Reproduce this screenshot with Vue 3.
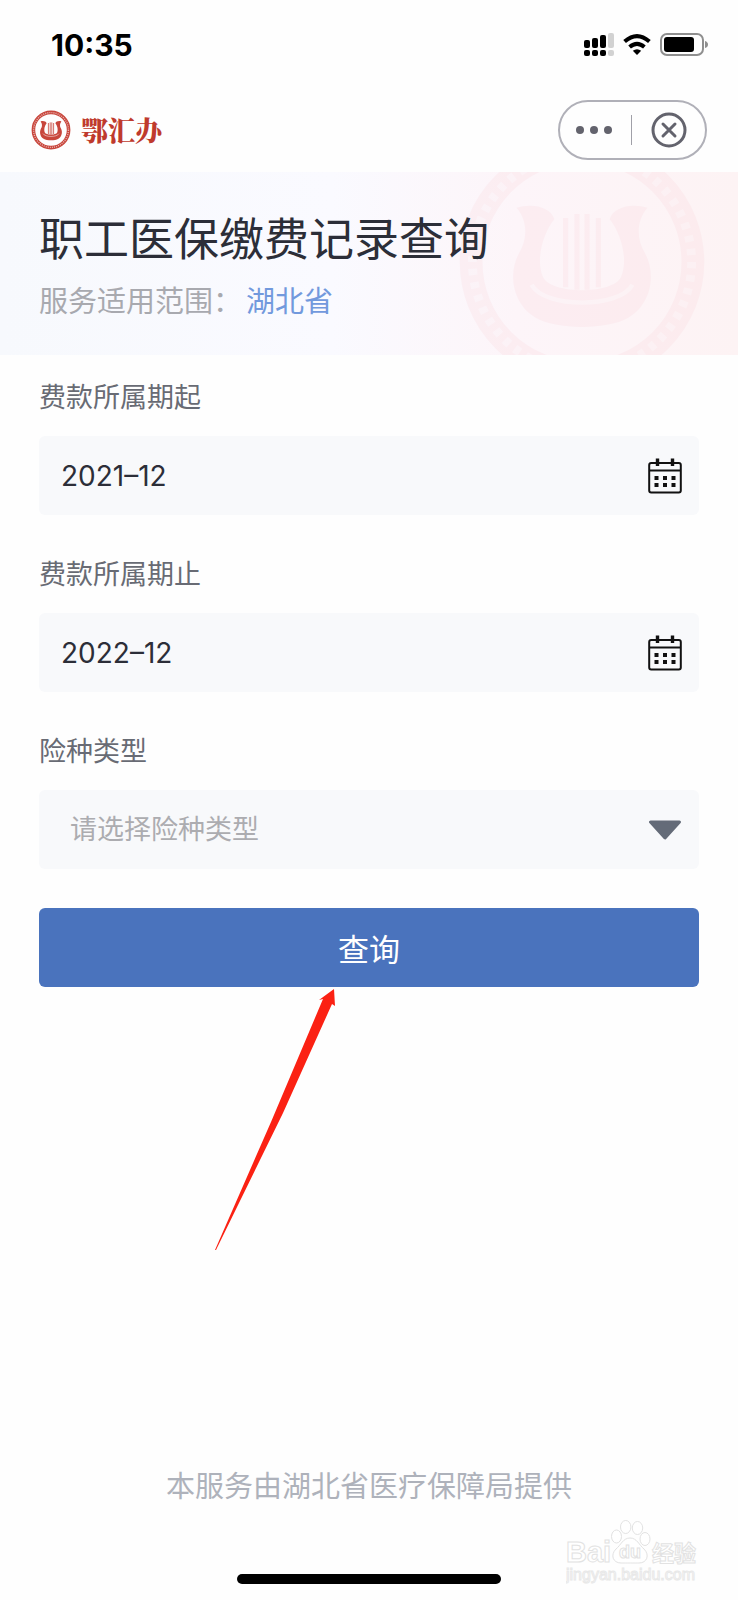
<template>
  <div class="pagina">
    <svg class="defs" aria-hidden="true">
      <symbol id="sello" viewBox="0 0 40 40">
        <circle cx="20" cy="20" r="17.6" fill="none" stroke="currentColor" stroke-width="3.6" />
        <circle cx="20" cy="20" r="17.4" fill="none" stroke="#fff" stroke-width="1.4" stroke-dasharray="1 1.1" opacity="0.6" />
        <path d="M9.6 11.4 C12 10.6 15 11.2 15.6 13.2 C13.8 15.4 12.6 19.6 13.8 22.4 C15 25.2 25 25.2 26.2 22.4 C27.4 19.6 26.2 15.4 24.4 13.2 C25 11.2 28 10.6 30.4 11.4 C28.6 13.4 28.6 16.4 30 18.6 C32 22.4 30.6 27 27.4 28.8 C24 30.8 16 30.8 12.6 28.8 C9.4 27 8 22.4 10 18.6 C11.4 16.4 11.4 13.4 9.6 11.4 Z" fill="currentColor" />
        <path d="M17.4 13 V24 M19.2 12.4 V24.4 M20.8 12.4 V24.4 M22.6 13 V24" fill="none" stroke="currentColor" stroke-width="0.8" />
        <path d="M12 23.6 C14 27.4 26 27.4 28 23.6" fill="none" stroke="#fff" stroke-width="0.7" opacity="0.7" />
      </symbol>
    </svg>

    <div class="barra-estado">
      <span class="hora">10:35</span>
      <div class="indicadores">
        <svg width="30" height="24" viewBox="0 0 30 24">
          <g fill="#000">
            <rect x="0" y="7" width="6" height="8" rx="2" />
            <rect x="8" y="5" width="6" height="10" rx="2" />
            <rect x="16" y="2" width="6" height="13" rx="2" />
            <rect x="0" y="17" width="6" height="6" rx="2" />
            <rect x="8" y="17" width="6" height="6" rx="2" />
            <rect x="16" y="17" width="6" height="6" rx="2" />
          </g>
          <g fill="#d2d2d2">
            <rect x="24" y="0" width="6" height="15" rx="2" />
            <rect x="24" y="17" width="6" height="6" rx="2" />
          </g>
        </svg>
        <svg width="28" height="22" viewBox="0 0 28 22">
          <path d="M1.6 7.6 Q14 -3.4 26.4 7.6" fill="none" stroke="#000" stroke-width="4" />
          <path d="M6.6 13 Q14 6.6 21.4 13" fill="none" stroke="#000" stroke-width="4" />
          <path d="M14 21 L9.8 16.8 Q14 13.6 18.2 16.8 Z" fill="#000" />
        </svg>
        <svg width="48" height="24" viewBox="0 0 48 24">
          <rect x="1" y="1" width="42" height="21" rx="6" fill="none" stroke="#8f8f8f" stroke-width="2" />
          <rect x="4" y="4" width="30" height="15" rx="3" fill="#000" />
          <path d="M45 8 Q48 9 48 11.5 Q48 14 45 15 Z" fill="#8f8f8f" />
        </svg>
      </div>
    </div>

    <header class="cabecera">
      <div class="marca">
        <svg class="logo" width="40" height="40"><use href="#sello" /></svg>
        <span class="nombre">鄂汇办</span>
      </div>
      <div class="capsula">
        <button type="button" aria-label="更多">
          <svg width="36" height="36" viewBox="0 0 36 36" fill="#63636d">
            <circle cx="4" cy="18" r="4" />
            <circle cx="18" cy="18" r="4" />
            <circle cx="32" cy="18" r="4" />
          </svg>
        </button>
        <span class="separador"></span>
        <button type="button" aria-label="关闭">
          <svg width="36" height="36" viewBox="0 0 36 36" fill="none" stroke="#63636d" stroke-width="3">
            <circle cx="18" cy="18" r="16" />
            <path d="M12 12 L24 24 M24 12 L12 24" stroke-linecap="round" />
          </svg>
        </button>
      </div>
    </header>

    <section class="banner">
      <svg class="banner-sello"><use href="#sello" /></svg>
      <h1>职工医保缴费记录查询</h1>
      <p>服务适用范围：<a href="#">湖北省</a></p>
    </section>

    <form class="formulario" @submit.prevent>
      <div v-for="fecha in fechas" :key="fecha.id" class="campo">
        <label :for="fecha.id">{{ fecha.etiqueta }}</label>
        <div class="caja">
          <input :id="fecha.id" v-model="fecha.valor" type="text" readonly />
          <svg width="34" height="36" viewBox="0 0 34 36">
            <rect x="1.2" y="5" width="31.6" height="29.6" rx="2" fill="none" stroke="#111" stroke-width="2" />
            <path d="M1 12.5 H33" stroke="#111" stroke-width="2" />
            <path d="M9.5 0.5 V8 M24.5 0.5 V8" stroke="#111" stroke-width="3.4" />
            <g fill="#111">
              <rect x="6.5" y="18" width="4" height="4" />
              <rect x="15" y="18" width="4" height="4" />
              <rect x="23.5" y="18" width="4" height="4" />
              <rect x="6.5" y="25" width="4" height="4" />
              <rect x="15" y="25" width="4" height="4" />
              <rect x="23.5" y="25" width="4" height="4" />
            </g>
          </svg>
        </div>
      </div>

      <div class="campo">
        <label for="tipo">险种类型</label>
        <div class="caja">
          <select id="tipo" v-model="tipo">
            <option value="">请选择险种类型</option>
          </select>
          <svg width="34" height="20" viewBox="0 0 34 20">
            <path d="M2.5 2 H31.5 L17 18 Z" fill="#646b78" stroke="#646b78" stroke-width="3" stroke-linejoin="round" />
          </svg>
        </div>
      </div>

      <div class="acciones">
        <button type="submit" class="btn-consultar">查询</button>
        <svg class="flecha" width="122" height="266" viewBox="0 0 122 266">
          <path d="M119 2 L120 19 L117 17 L68 126 L1 263 L0 263 L56 135 L108 12 L104 13 Z" fill="#fb2113" />
        </svg>
      </div>
    </form>

    <footer class="pie">
      <p>本服务由湖北省医疗保障局提供</p>
      <div class="inicio"></div>
    </footer>

    <svg class="marca-agua" width="140" height="70" viewBox="0 0 140 70">
      <g fill="#fff" stroke="#e2e2e2" stroke-width="1">
        <text x="0" y="42" class="agua-grande">Bai</text>
        <path d="M64 18 C71 18 73 25 78 29 C84 35 81 43 73 43 C69 43 60 43 55 43 C47 43 44 35 50 29 C55 25 57 18 64 18 Z" />
        <ellipse cx="50.5" cy="16.5" rx="5" ry="6.5" />
        <ellipse cx="59.7" cy="7" rx="5.2" ry="6.5" />
        <ellipse cx="71.5" cy="8" rx="5.2" ry="6.5" />
        <ellipse cx="79" cy="19" rx="5" ry="6.5" />
        <text x="53" y="38" class="agua-du">du</text>
        <text x="86" y="41" class="agua-cjk">经验</text>
        <text x="0" y="60" class="agua-url">jingyan.baidu.com</text>
      </g>
    </svg>
  </div>
</template>

<script setup>
import { ref } from 'vue';

const fechas = ref([
  { id: 'desde', etiqueta: '费款所属期起', valor: '2021–12' },
  { id: 'hasta', etiqueta: '费款所属期止', valor: '2022–12' }
]);
const tipo = ref('');
</script>

<style>
body {
  margin: 0;
  background-color: #fefefe;
}
</style>

<style scoped>
.pagina {
  position: relative;
  display: flex;
  flex-direction: column;
  min-height: 100vh;
  font-family: Inter, "Noto Sans CJK SC", sans-serif;
  font-weight: 400;
  color: #2c2e38;
}
.defs {
  position: absolute;
  width: 0;
  height: 0;
}
svg {
  display: block;
  flex-shrink: 0;
}
button, input, select {
  font-family: inherit;
  font-weight: inherit;
  border: 0;
  padding: 0;
  margin: 0;
  background: none;
}
.barra-estado {
  display: flex;
  justify-content: space-between;
  align-items: center;
  box-sizing: border-box;
  height: 88px;
  padding: 2px 30px 0 51px;
}
.hora {
  font-size: 30px;
  font-weight: 700;
  color: #000;
}
.indicadores {
  display: flex;
  align-items: center;
  gap: 9px;
}
.cabecera {
  display: flex;
  justify-content: space-between;
  align-items: center;
  height: 84px;
  padding: 0 31px;
}
.marca {
  display: flex;
  align-items: center;
  gap: 10px;
}
.logo {
  color: #c8463c;
}
.nombre {
  font-family: "Noto Serif CJK SC", "Noto Sans CJK SC", serif;
  font-size: 27px;
  line-height: 40px;
  font-weight: 900;
  color: #bf3a2d;
}
.capsula {
  display: flex;
  align-items: center;
  justify-content: space-between;
  box-sizing: border-box;
  width: 149px;
  height: 60px;
  padding: 0 18px 0 16px;
  border: 2px solid #b0b0b8;
  border-radius: 30px;
}
.capsula button {
  cursor: pointer;
}
.separador {
  width: 1px;
  height: 30px;
  background-color: #a0a0a8;
}
.banner {
  position: relative;
  overflow: hidden;
  box-sizing: border-box;
  height: 183px;
  padding: 36px 39px 0;
  background: linear-gradient(90deg, #f7f9fd 0%, #fafaff 45%, #fdf5f9 70%, #fdf3f4 100%);
}
.banner-sello {
  position: absolute;
  top: -36px;
  right: 30px;
  width: 252px;
  height: 252px;
  color: #f6b6c0;
  opacity: 0.12;
}
.banner h1 {
  position: relative;
  margin: 0;
  font-size: 45px;
  line-height: 64px;
  font-weight: 400;
}
.banner p {
  position: relative;
  margin: 8px 0 0;
  font-size: 29px;
  line-height: 44px;
  color: #a8a9af;
}
.banner a {
  margin-left: 4px;
  color: #7299dd;
  text-decoration: none;
}
.formulario {
  padding: 22px 39px 0;
}
.campo {
  margin-bottom: 39px;
}
.campo label {
  display: block;
  margin-bottom: 17px;
  font-size: 27px;
  line-height: 42px;
  color: #686b74;
}
.caja {
  display: flex;
  align-items: center;
  height: 79px;
  padding-right: 17px;
  border-radius: 6px;
  background-color: #f8f9fb;
}
.caja input, .caja select {
  flex: 1;
  min-width: 0;
  height: 100%;
  outline: none;
}
.caja input {
  padding-left: 22px;
  font-size: 28px;
  color: #2c2e38;
}
.caja select {
  padding-left: 31px;
  font-size: 27px;
  appearance: none;
  color: #acacb0;
}
.acciones {
  position: relative;
}
.btn-consultar {
  display: block;
  width: 100%;
  height: 79px;
  border-radius: 6px;
  background-color: #4a73bd;
  color: #fff;
  font-size: 31px;
  cursor: pointer;
}
.flecha {
  position: absolute;
  top: 100%;
  left: 176px;
}
.pie {
  display: flex;
  flex-direction: column;
  align-items: center;
  margin-top: auto;
  padding-bottom: 16px;
}
.pie p {
  margin: 0 0 65px;
  font-size: 29px;
  line-height: 44px;
  color: #aeb2bb;
}
.inicio {
  width: 264px;
  height: 10px;
  border-radius: 5px;
  background-color: #000;
}
.marca-agua {
  position: absolute;
  right: 32px;
  bottom: 10px;
}
.agua-grande {
  font: 700 29px "Liberation Sans", sans-serif;
}
.agua-du {
  font: 700 18px "Liberation Sans", sans-serif;
}
.agua-cjk {
  font: 700 22px "Noto Sans CJK SC", sans-serif;
}
.agua-url {
  font: 400 16px "Liberation Sans", sans-serif;
  stroke: #e8e8e8;
}
</style>
